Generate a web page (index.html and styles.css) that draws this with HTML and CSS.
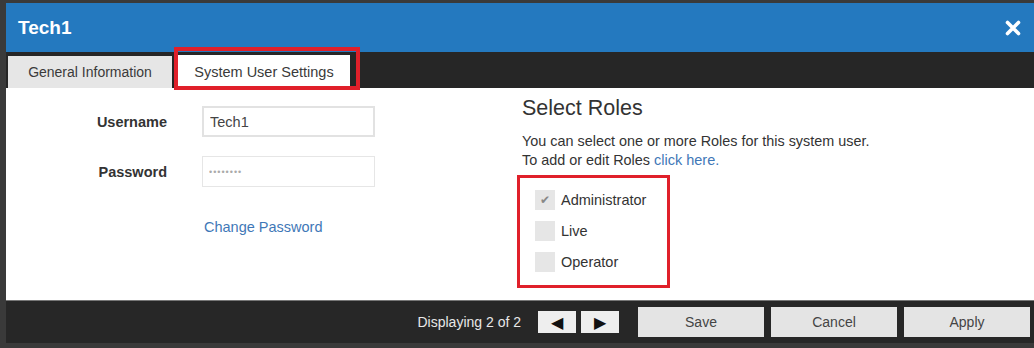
FILE: index.html
```html
<!DOCTYPE html>
<html lang="en">
<head>
  <meta charset="UTF-8" />
  <title>Tech1 - System User Settings</title>
  <link rel="stylesheet" href="styles.css">
</head>
<body>
  <div class="dialog">
    <header class="titlebar">
      <h1>Tech1</h1>
      <svg class="close" width="16" height="16" viewBox="0 0 16 16">
        <path d="M2.5 2.5 L13.5 13.5 M13.5 2.5 L2.5 13.5" stroke="white" stroke-width="3.6" stroke-linecap="round" />
      </svg>
    </header>

    <nav class="tabs">
      <div class="tab">General Information</div>
      <div class="tab active">System User Settings</div>
    </nav>

    <main class="content">
      <div class="user-form">
        <label>Username</label>
        <input type="text" value="Tech1" />
        <label>Password</label>
        <input type="text" class="pw" value="••••••••" />
        <span></span>
        <a href="#" class="link">Change Password</a>
      </div>

      <div class="roles">
        <h2>Select Roles</h2>
        <p>You can select one or more Roles for this system user.<br>
          To add or edit Roles <a href="#" class="link">click here.</a></p>
        <div class="role-list">
          <div class="role"><span class="check on">&#x2714;</span>Administrator</div>
          <div class="role"><span class="check"></span>Live</div>
          <div class="role"><span class="check"></span>Operator</div>
        </div>
      </div>
    </main>

    <footer class="footer">
      <span class="count">Displaying 2 of 2</span>
      <div class="pager">
        <button class="arrow">&#x25C0;</button>
        <button class="arrow">&#x25B6;</button>
      </div>
      <button class="btn">Save</button>
      <button class="btn">Cancel</button>
      <button class="btn">Apply</button>
    </footer>
  </div>
</body>
</html>
```

FILE: styles.css
```css
body {
  font-family: 'Liberation Sans', Arial, sans-serif;
  margin: 0;
  padding: 3px 0 0 6px;
  background: #3a3a3a;
  height: 348px;
  box-sizing: border-box;
  overflow: hidden;
}
.dialog {
  width: 1028px;
  background: white;
}
.titlebar {
  height: 49px;
  background: #2479bf;
  color: white;
  display: flex;
  justify-content: space-between;
  align-items: center;
  padding: 0 13px 0 12px;
}
h1 {
  margin: 0;
  font-size: 19px;
  font-weight: bold;
}
.tabs {
  height: 36px;
  background: #262626;
  display: flex;
  align-items: flex-end;
  gap: 6px;
  padding-left: 2px;
}
.tab {
  height: 32px;
  width: 164px;
  background: #e6e6e6;
  color: #3a3a3a;
  font-size: 14px;
  display: flex;
  align-items: center;
  justify-content: center;
}
.tab.active {
  position: relative;
  width: 172px;
  height: 33px;
  background: white;
  font-size: 14.5px;
}
.tab.active::after {
  content: "";
  position: absolute;
  left: -4px;
  right: -10px;
  top: -8px;
  bottom: -2px;
  border: 4px solid #e0202a;
}
.content {
  height: 212px;
  display: flex;
}
.user-form {
  width: 516px;
  display: grid;
  grid-template-columns: 161px 173px;
  column-gap: 35px;
  row-gap: 19px;
  align-items: center;
  align-content: start;
  padding-top: 18px;
}
.user-form label {
  text-align: right;
  font-weight: bold;
  font-size: 14.5px;
  color: #333;
}
.user-form input {
  height: 31px;
  box-sizing: border-box;
  border: 2px solid #e2e2e2;
  padding: 0 6px;
  font-family: inherit;
  font-size: 14.5px;
  color: #444;
}
.user-form .pw {
  color: #aaa;
  font-size: 9px;
  letter-spacing: 1px;
  border-width: 1px;
  border-color: #e6e6e6;
}
.user-form .link {
  margin-top: 13px;
  padding-left: 2px;
}
.link {
  color: #3f78b7;
  text-decoration: none;
  font-size: 14.5px;
}
.roles {
  padding-top: 8px;
  color: #333;
}
h2 {
  margin: 0 0 11.5px;
  font-size: 21.5px;
  line-height: 24px;
  font-weight: normal;
}
.roles p {
  margin: 0;
  font-size: 14.4px;
  line-height: 19px;
}
.role-list {
  margin: 5.5px 0 0 -5px;
  width: 153px;
  height: 113px;
  box-sizing: border-box;
  border: 3px solid #e0202a;
  padding: 12px 0 0 15px;
  display: flex;
  flex-direction: column;
  gap: 11px;
}
.role {
  display: flex;
  align-items: center;
  gap: 6px;
  font-size: 14.5px;
  height: 20px;
}
.check {
  width: 20px;
  height: 20px;
  background: #e6e6e6;
  color: #888;
  font-size: 12px;
  display: flex;
  align-items: center;
  justify-content: center;
}
.footer {
  height: 43px;
  background: #272727;
  border-top: 1px solid #777;
  box-sizing: border-box;
  display: flex;
  align-items: center;
  justify-content: flex-end;
  gap: 7px;
  padding-right: 4px;
}
.count {
  color: #e8e8e8;
  font-size: 14px;
  margin-right: 10px;
}
.pager {
  display: flex;
  gap: 5px;
  margin-right: 12px;
}
.arrow {
  width: 38px;
  height: 22px;
  border: none;
  background: #eeeeee;
  color: #111;
  font-size: 16px;
  padding: 0;
}
.btn {
  width: 126px;
  height: 30px;
  border: none;
  background: #e4e4e4;
  color: #444;
  font-family: inherit;
  font-size: 14px;
}
```
